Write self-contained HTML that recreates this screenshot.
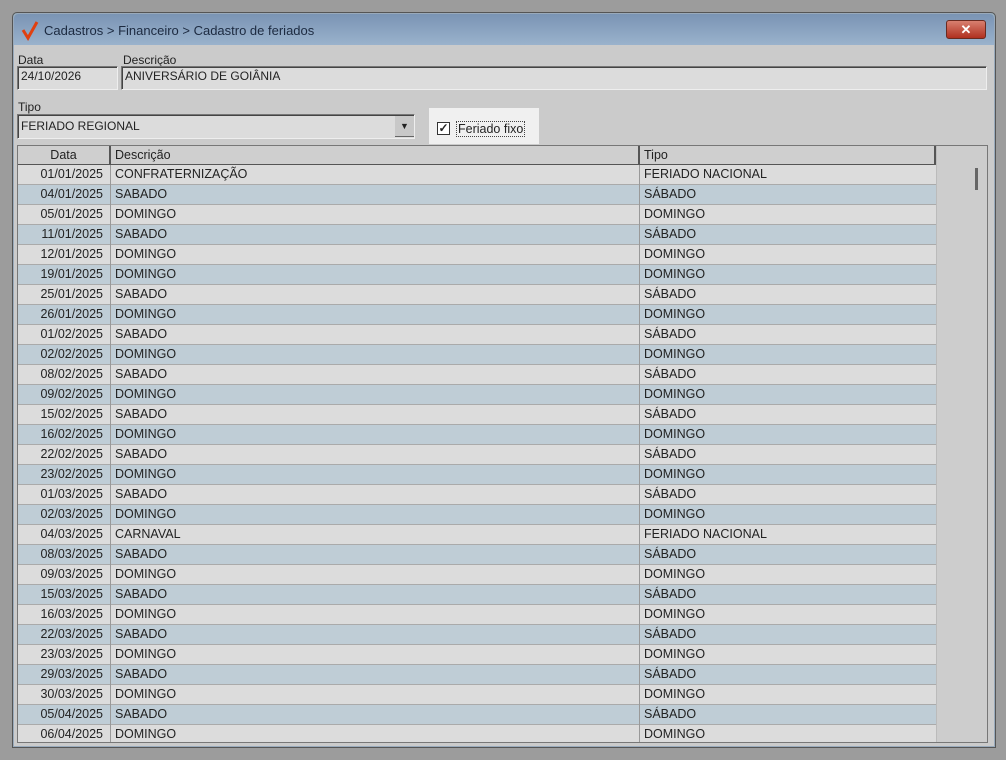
<!DOCTYPE html>
<html><head><meta charset="utf-8"><style>
*{margin:0;padding:0;box-sizing:border-box}
body{width:1006px;height:760px;background:#9c9c9c;font-family:"Liberation Sans",sans-serif;font-size:12px;color:#222;position:relative;overflow:hidden}
.win{position:absolute;left:12px;top:12px;width:984px;height:736px;background:#cbcbcb;border:1px solid #555;border-radius:5px 5px 0 0;box-shadow:inset 0 0 0 1px #9ab,0 0 0 1px #3a8fa0 inset}
.tb{position:absolute;left:1px;top:1px;right:1px;height:31px;background:linear-gradient(#7a94b4,#9ab2cc);border-radius:4px 4px 0 0}
.tt{position:absolute;left:30px;top:9px;font-size:13px;color:#1c2a40}
.x{position:absolute;right:8px;top:6px;width:40px;height:19px;background:linear-gradient(#d88070,#b03020);border:1px solid #6a2a20;border-radius:3px;color:#fff;text-align:center;font-weight:bold;font-size:13px;line-height:17px}
.lbl{position:absolute;font-size:12px}
.in{position:absolute;background:#dcdcdc;border:1px solid #777;border-right-color:#eee;border-bottom-color:#eee;box-shadow:inset 1px 1px 0 #444;padding:2px 3px;font-size:12px}
.grid{position:absolute;left:17px;top:145px;width:971px;height:598px;border:1px solid #777;background:#d0d0d0;overflow:hidden}
.row{position:absolute;left:0;height:20px;width:918px;border-bottom:1px solid #aaa;font-size:12.5px;line-height:19px}
.row span{position:absolute;top:0;height:20px}
.c1{left:0;width:93px;text-align:right;padding-right:7px;border-right:1px solid #999}
.c2{left:93px;width:529px;padding-left:4px;border-right:1px solid #999}
.c3{left:622px;width:296px;padding-left:4px}
.hd{background:#cfcfcf;border-bottom:2px solid #555;top:0}
.hd span{border-right:2px solid #555}
</style></head><body>
<div class="win">
<div class="tb">
<svg style="position:absolute;left:7px;top:7px" width="18" height="20"><path d="M2 9 L7 17 L16 1" stroke="#e04010" stroke-width="3" fill="none"/></svg>
<div class="tt">Cadastros &gt; Financeiro &gt; Cadastro de feriados</div>
<div class="x">✕</div>
</div>
</div>
<div class="lbl" style="left:18px;top:53px">Data</div>
<div class="lbl" style="left:123px;top:53px">Descrição</div>
<div class="in" style="left:17px;top:66px;width:101px;height:24px">24/10/2026</div>
<div class="in" style="left:121px;top:66px;width:866px;height:24px">ANIVERSÁRIO DE GOIÂNIA</div>
<div class="lbl" style="left:18px;top:100px">Tipo</div>
<div class="in" style="left:17px;top:114px;width:398px;height:25px;padding-top:4px">FERIADO REGIONAL</div>
<div style="position:absolute;left:395px;top:116px;width:19px;height:21px;background:#c8c8c8;border-bottom:1px solid #666;text-align:center;font-size:9px;line-height:21px">▼</div>
<div style="position:absolute;left:429px;top:108px;width:110px;height:36px;background:#f0f0f0"></div>
<div style="position:absolute;left:437px;top:122px;width:13px;height:13px;border:1px solid #333;background:#fff;font-size:12px;line-height:11px;text-align:center;font-weight:bold">✓</div>
<div style="position:absolute;left:456px;top:121px;border:1px dotted #444;padding:0 1px;font-size:12.5px">Feriado fixo</div>
<div class="grid">
<div class="row hd"><span class="c1" style="text-align:center;padding:0">Data</span><span class="c2">Descrição</span><span class="c3">Tipo</span></div>
<div style="position:absolute;left:918px;top:0;width:53px;height:598px;background:#cdcdcd;border-left:1px solid #bbb"></div>
<div style="position:absolute;left:957px;top:22px;width:3px;height:22px;background:#666"></div>
<div id="rows"></div>
</div>
<script>
var d=[["01/01/2025","CONFRATERNIZAÇÃO","FERIADO NACIONAL"]];
var S=["SABADO","SÁBADO"],D=["DOMINGO","DOMINGO"];
var list=[["04/01",S],["05/01",D],["11/01",S],["12/01",D],["19/01",D],["25/01",S],["26/01",D],["01/02",S],["02/02",D],["08/02",S],["09/02",D],["15/02",S],["16/02",D],["22/02",S],["23/02",D],["01/03",S],["02/03",D],["04/03",["CARNAVAL","FERIADO NACIONAL"]],["08/03",S],["09/03",D],["15/03",S],["16/03",D],["22/03",S],["23/03",D],["29/03",S],["30/03",D],["05/04",S],["06/04",D]];
list.forEach(function(x){d.push([x[0]+"/2025",x[1][0],x[1][1]])});
var h="";d.forEach(function(r,i){h+='<div class="row" style="top:'+(19+i*20)+'px;background:'+(i%2?'#bfcdd6':'#dcdcdc')+'"><span class="c1">'+r[0]+'</span><span class="c2">'+r[1]+'</span><span class="c3">'+r[2]+'</span></div>'});
document.getElementById("rows").innerHTML=h;
</script>
</body></html>
